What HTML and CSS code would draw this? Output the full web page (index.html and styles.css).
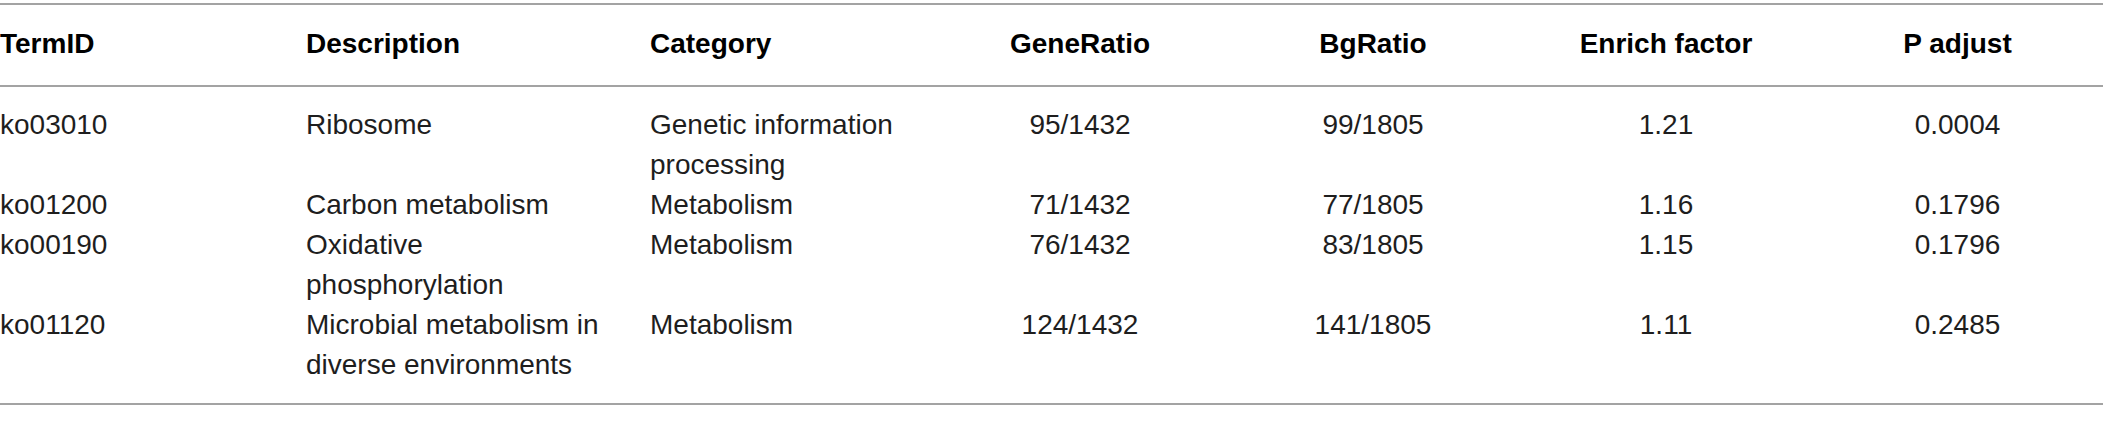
FILE: index.html
```html
<!DOCTYPE html>
<html lang="en">
<head>
<meta charset="utf-8">
<title>KEGG enrichment</title>
<link rel="stylesheet" href="styles.css">
</head>
<body>
<table class="tbl">
  <colgroup>
    <col class="c-id">
    <col class="c-desc">
    <col class="c-cat">
    <col class="c-gene">
    <col class="c-bg">
    <col class="c-enr">
    <col class="c-p">
  </colgroup>
  <thead>
    <tr>
      <th class="l">TermID</th>
      <th class="l">Description</th>
      <th class="l">Category</th>
      <th class="c gene-h">GeneRatio</th>
      <th class="c">BgRatio</th>
      <th class="c">Enrich factor</th>
      <th class="c">P adjust</th>
    </tr>
  </thead>
  <tbody>
    <tr>
      <td class="l">ko03010</td>
      <td class="l desc">Ribosome</td>
      <td class="l cat">Genetic information processing</td>
      <td class="c">95/1432</td>
      <td class="c">99/1805</td>
      <td class="c">1.21</td>
      <td class="c">0.0004</td>
    </tr>
    <tr>
      <td class="l">ko01200</td>
      <td class="l desc">Carbon metabolism</td>
      <td class="l cat">Metabolism</td>
      <td class="c">71/1432</td>
      <td class="c">77/1805</td>
      <td class="c">1.16</td>
      <td class="c">0.1796</td>
    </tr>
    <tr>
      <td class="l">ko00190</td>
      <td class="l desc">Oxidative phosphorylation</td>
      <td class="l cat">Metabolism</td>
      <td class="c">76/1432</td>
      <td class="c">83/1805</td>
      <td class="c">1.15</td>
      <td class="c">0.1796</td>
    </tr>
    <tr>
      <td class="l">ko01120</td>
      <td class="l desc">Microbial metabolism in diverse environments</td>
      <td class="l cat">Metabolism</td>
      <td class="c">124/1432</td>
      <td class="c">141/1805</td>
      <td class="c">1.11</td>
      <td class="c">0.2485</td>
    </tr>
  </tbody>
</table>
</body>
</html>
```

FILE: styles.css
```css
html, body {
  margin: 0;
  padding: 0;
  background: #ffffff;
}

body {
  padding-top: 3px;
  font-family: "Liberation Sans", Arial, Helvetica, sans-serif;
  color: #1e1e1e;
}

.tbl {
  width: 2103px;
  border-collapse: collapse;
  table-layout: fixed;
  font-size: 28px;
  line-height: 40px;
}

.c-id { width: 306px; }
.c-desc { width: 344px; }
.c-cat { width: 284px; }
.c-gene { width: 292px; }
.c-bg { width: 294px; }
.c-enr { width: 292px; }
.c-p { width: 291px; }

.tbl thead tr {
  border-top: 2px solid #a3a3a3;
  border-bottom: 2px solid #a3a3a3;
}

.tbl tbody tr:last-child {
  border-bottom: 2px solid #a3a3a3;
}

.tbl th {
  font-weight: bold;
  padding: 19px 0 21px 0;
  vertical-align: top;
  color: #000;
}

.tbl td {
  font-weight: normal;
  padding: 0;
  vertical-align: top;
}

.tbl tbody tr:first-child td {
  padding-top: 18px;
}

.tbl tbody tr:last-child td {
  padding-bottom: 18px;
}

.l {
  text-align: left;
  padding-left: 1px;
}

.tbl .desc {
  padding-right: 40px;
}

.tbl .cat {
  padding-right: 24px;
}

.c {
  text-align: center;
}
```
